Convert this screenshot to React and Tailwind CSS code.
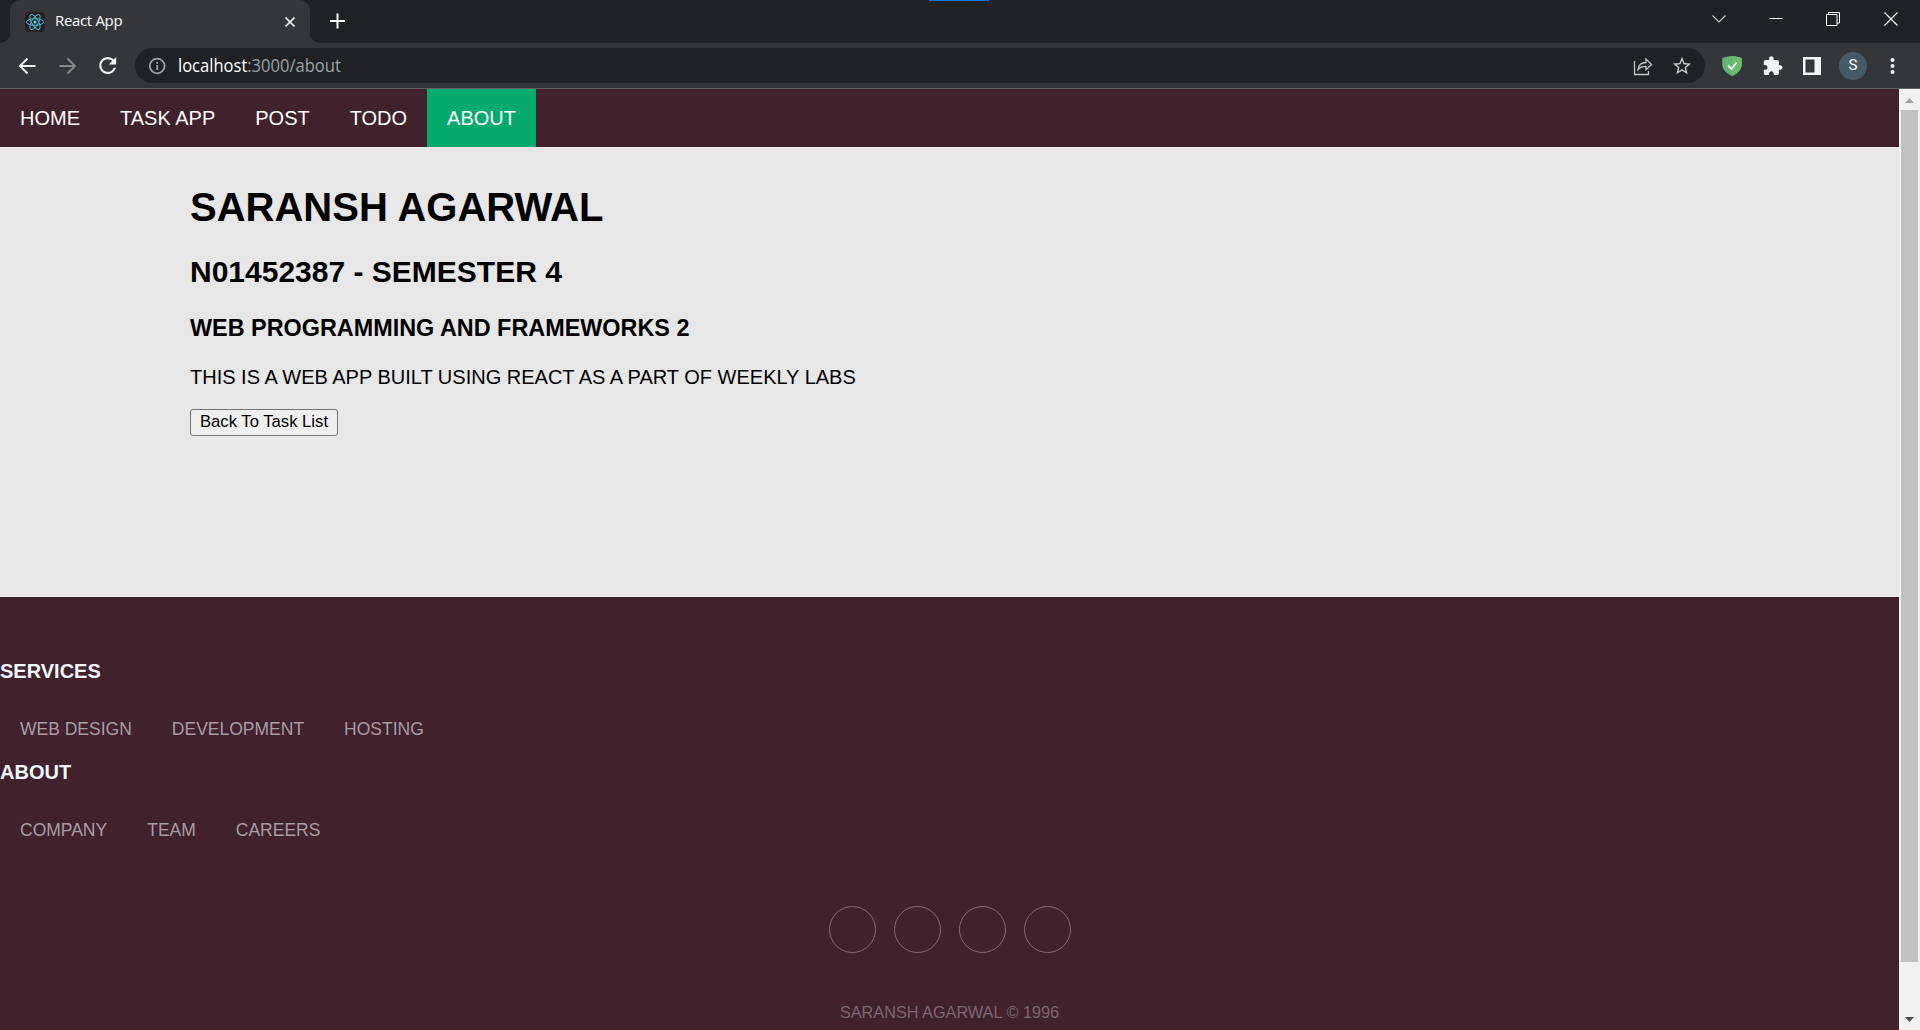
const Nav = ({ children, active }) => (
  <a className={`flex h-[58px] items-center px-5 text-[20px] leading-[23px] whitespace-nowrap ${active ? "bg-[#04aa6d]" : ""}`}>{children}</a>
);

function ReactIcon() {
  return (
    <svg className="h-5 w-5 rounded-sm bg-[#222222]" viewBox="0 0 20 20" fill="none" stroke="#52b4ce" strokeWidth="1">
      <circle cx="10" cy="10" r="1.5" fill="#61dafb" stroke="none" />
      <ellipse cx="10" cy="10" rx="8.5" ry="3.3" />
      <ellipse cx="10" cy="10" rx="8.5" ry="3.3" transform="rotate(60 10 10)" />
      <ellipse cx="10" cy="10" rx="8.5" ry="3.3" transform="rotate(120 10 10)" />
    </svg>
  );
}

function TabStrip() {
  return (
    <div className="relative flex h-[43px] bg-[#202124]">
      <div className="flex w-[10px] items-end bg-[#35363a]">
        <div className="h-[43px] w-[10px] rounded-br-[10px] bg-[#202124]" />
      </div>
      <div className="flex w-[300px] shrink-0 bg-[#202124]">
        <div className="flex w-[300px] items-center rounded-t-[10px] bg-[#35363a] pl-[15px] pr-[12px]">
          <ReactIcon />
          <span className="ml-[10px] flex-1 origin-left scale-x-[.995] pb-[2px] font-['Open_Sans',sans-serif] text-[15px] tracking-[-0.3px] text-white">React App</span>
          <svg className="h-4 w-4" viewBox="0 0 16 16" stroke="#fff" strokeWidth="1.7"><path d="M3.500 3.500l9 9M12.500 3.500l-9 9" /></svg>
        </div>
      </div>
      <div className="w-[10px] bg-[#35363a]">
        <div className="h-[43px] w-[10px] rounded-bl-[10px] bg-[#202124]" />
      </div>
      <svg className="mt-[13px] ml-[9px] h-4 w-4" viewBox="0 0 16 16" stroke="#fff" strokeWidth="2"><path d="M8.500 .5v15M1 8h15" /></svg>
      <div className="absolute top-0 left-[929px] h-px w-[60px] bg-[#0078d4]" />
      <div className="ml-auto flex h-[37px] items-center pr-[22px]">
        <svg className="mr-[43px] h-[14px] w-[14px]" viewBox="0 0 14 14" fill="none" stroke="#c8c8c8" strokeWidth="1.1"><path d="M.5 3.500L7 10l6.500-6.500" /></svg>
        <svg className="mr-[43px] h-[14px] w-[14px]" viewBox="0 0 14 14" stroke="#fff"><path d="M.5 6.500h13" /></svg>
        <svg className="mr-[44px] h-[14px] w-[14px]" viewBox="0 0 14 14" fill="none" stroke="#fff"><path d="M.5 2.500h10.500v11H.5zM2.500 2.500V.5h11v10.500h-2.500" /></svg>
        <svg className="h-[14px] w-[14px]" viewBox="0 0 14 14" stroke="#fff" strokeWidth="1.2"><path d="M.5.5l13 13M13.500.5l-13 13" /></svg>
      </div>
    </div>
  );
}

function Toolbar() {
  return (
    <div className="flex h-[46px] items-center border-b border-[#5f6063] bg-[#35363a]">
      <svg className="ml-[17px] h-5 w-5" viewBox="0 0 20 20" fill="none" stroke="#f1f3f4" strokeWidth="1.900"><path d="M18.500 10H3M10.500 2.500L3 10l7.500 7.500" /></svg>
      <svg className="ml-[20px] h-5 w-5" viewBox="0 0 20 20" fill="none" stroke="#87888a" strokeWidth="1.900"><path d="M2.500 10H18M10.500 2.500L18 10l-7.500 7.500" /></svg>
      <svg className="ml-[20px] h-[22px] w-[22px]" viewBox="0 0 24 24" fill="#f1f3f4"><path d="M17.650 6.350C16.200 4.900 14.210 4 12 4c-4.420 0-7.990 3.580-7.990 8s3.570 8 7.990 8c3.730 0 6.840-2.550 7.730-6h-2.080c-.82 2.330-3.040 4-5.650 4-3.310 0-6-2.690-6-6s2.690-6 6-6c1.660 0 3.140.69 4.220 1.780L13 11h7V4l-2.350 2.350z" transform="translate(-2.100 -2.300) scale(1.150)" /></svg>
      <div className="ml-[16px] flex h-[35px] w-[1570px] items-center rounded-full bg-[#202124] pr-[12px] pl-[13px]">
        <svg className="h-[18px] w-[18px]" viewBox="0 0 18 18" fill="none" stroke="#9aa0a6" strokeWidth="1.800"><circle cx="9.200" cy="9" r="7.400" /><path d="M9.200 8v5M9.200 5v1.700" /></svg>
        <span className="ml-[12px] flex-1 origin-left scale-x-[.945] font-['Open_Sans',sans-serif] text-[17.500px] text-white">localhost<span className="text-[#9aa0a6]">:3000/about</span></span>
        <svg className="mr-[18px] h-5 w-5" viewBox="0 0 20 20" fill="none" stroke="#c4c5c6" strokeWidth="1.300"><path d="M1.500 5v13.500h14V15M5 13.500c.5-4.500 3-7 8-7V3l5.500 5.500-5.500 5.200v-3.400c-4 0-6 .7-8 3.200z" /></svg>
        <svg className="h-[22px] w-[22px]" viewBox="0 0 24 24" fill="#c4c5c6"><path d="M22 9.240l-7.190-.62L12 2 9.190 8.630 2 9.240l5.460 4.730L5.820 21 12 17.270 18.180 21l-1.630-7.030L22 9.240zM12 15.400l-3.760 2.270 1-4.280-3.320-2.880 4.380-.38L12 6.100l1.710 4.040 4.380.38-3.320 2.880 1 4.280L12 15.400z" /></svg>
      </div>
      <svg className="ml-[17px] h-5 w-5" viewBox="0 0 20 20"><path d="M10 0C7 0 3 1 .3 2v6c0 6 5 10 9.700 12 4.700-2 9.700-6 9.700-12V2C17 1 13 0 10 0z" fill="#67b279" /><path d="M10 0c3 0 7 1 9.700 2v6c0 6-5 10-9.700 12z" fill="#69bd6c" /><path d="M6 9.500l3.500 3.500 5-6.500" fill="none" stroke="#fff" strokeWidth="1.800" /></svg>
      <svg className="ml-[20px] h-[22px] w-[22px]" viewBox="0 0 24 24" fill="#f1f3f4"><path d="M20.500 11H19V7c0-1.100-.9-2-2-2h-4V3.500C13 2.120 11.880 1 10.500 1S8 2.120 8 3.500V5H4c-1.100 0-1.990.9-1.990 2v3.800H3.500c1.490 0 2.700 1.210 2.700 2.700s-1.210 2.700-2.700 2.700H2V20c0 1.100.9 2 2 2h3.800v-1.500c0-1.490 1.210-2.700 2.700-2.700s2.700 1.210 2.700 2.700V22H17c1.100 0 2-.9 2-2v-4h1.500c1.380 0 2.500-1.120 2.500-2.500S21.880 11 20.500 11z" transform="translate(0 .5) scale(.97)" /></svg>
      <svg className="ml-[19px] h-[18px] w-[18px]" viewBox="0 0 18 18"><path fillRule="evenodd" fill="#f1f3f4" d="M0 0h18v18H0zM2.500 2.500v13H11.500v-13z" /></svg>
      <div className="ml-[18px] flex h-7 w-7 items-center justify-center rounded-full bg-[#455a64] font-[Roboto,sans-serif] text-[15px] text-white">S</div>
      <svg className="ml-[17px] h-5 w-5" viewBox="0 0 20 20" fill="#f1f3f4"><circle cx="8.500" cy="4" r="2" /><circle cx="8.500" cy="10" r="2" /><circle cx="8.500" cy="16" r="2" /></svg>
    </div>
  );
}

function FooterGroup({ title, links }) {
  return (
    <div className="h-[101px]">
      <h3 className="text-[20px] leading-[23px] font-bold text-[#f0f8ff]">{title}</h3>
      <ul className="mt-[36px] flex gap-[40px] pl-5 text-[17.500px] leading-[20px] text-[#a89ba4]">
        {links.map((l) => <li key={l}>{l}</li>)}
      </ul>
    </div>
  );
}

export default function App() {
  return (
    <div className="flex h-[1030px] w-[1920px] flex-col overflow-hidden font-['Liberation_Sans',Arial,sans-serif]">
      <TabStrip />
      <Toolbar />
      <div className="flex h-[941px]">
        <div className="flex w-[1899px] flex-col">
          <nav className="flex h-[58px] bg-[#41212c] text-white">
            <Nav>HOME</Nav><Nav>TASK APP</Nav><Nav>POST</Nav><Nav>TODO</Nav><Nav active>ABOUT</Nav>
          </nav>
          <main className="h-[450px] bg-[#e7e7e7] pt-[37px] pl-[190px] text-black">
            <h1 className="text-[40px] leading-[46px] font-bold">SARANSH AGARWAL</h1>
            <h2 className="mt-[25px] text-[30px] leading-[34px] font-bold">N01452387 - SEMESTER 4</h2>
            <h3 className="mt-[26px] text-[23.400px] leading-[27px] font-bold">WEB PROGRAMMING AND FRAMEWORKS 2</h3>
            <p className="mt-[24px] text-[20px] leading-[23px]">THIS IS A WEB APP BUILT USING REACT AS A PART OF WEEKLY LABS</p>
            <button className="mt-[20px] flex h-[27px] w-[148px] items-center justify-center rounded-[3px] border border-[#767676] bg-[#efefef] pb-[2px] text-[16.667px] leading-[19px] whitespace-nowrap">Back To Task List</button>
          </main>
          <footer className="flex-1 bg-[#41212c] pt-[63px]">
            <FooterGroup title="SERVICES" links={["WEB DESIGN", "DEVELOPMENT", "HOSTING"]} />
            <FooterGroup title="ABOUT" links={["COMPANY", "TEAM", "CAREERS"]} />
            <div className="mt-[44px] flex justify-center gap-[18px]">
              {[0, 1, 2, 3].map((i) => <span key={i} className="h-[47px] w-[47px] rounded-full border border-[#7f6c76]" />)}
            </div>
            <p className="mt-[50px] text-center text-[16.250px] leading-[19px] text-[#7a6771]">SARANSH AGARWAL © 1996</p>
          </footer>
        </div>
        <div className="flex w-[21px] flex-col items-center bg-[#f1f1f1]">
          <svg className="h-[21px] w-[21px]" viewBox="0 0 21 21" fill="#a3a3a3"><path d="M6 14l4.500-5 4.500 5z" /></svg>
          <div className="h-[852px] w-[17px] bg-[#c1c1c1]" />
          <svg className="mt-auto h-[21px] w-[21px]" viewBox="0 0 21 21" fill="#505050"><path d="M6 8l4.500 5L15 8z" /></svg>
        </div>
      </div>
    </div>
  );
}
